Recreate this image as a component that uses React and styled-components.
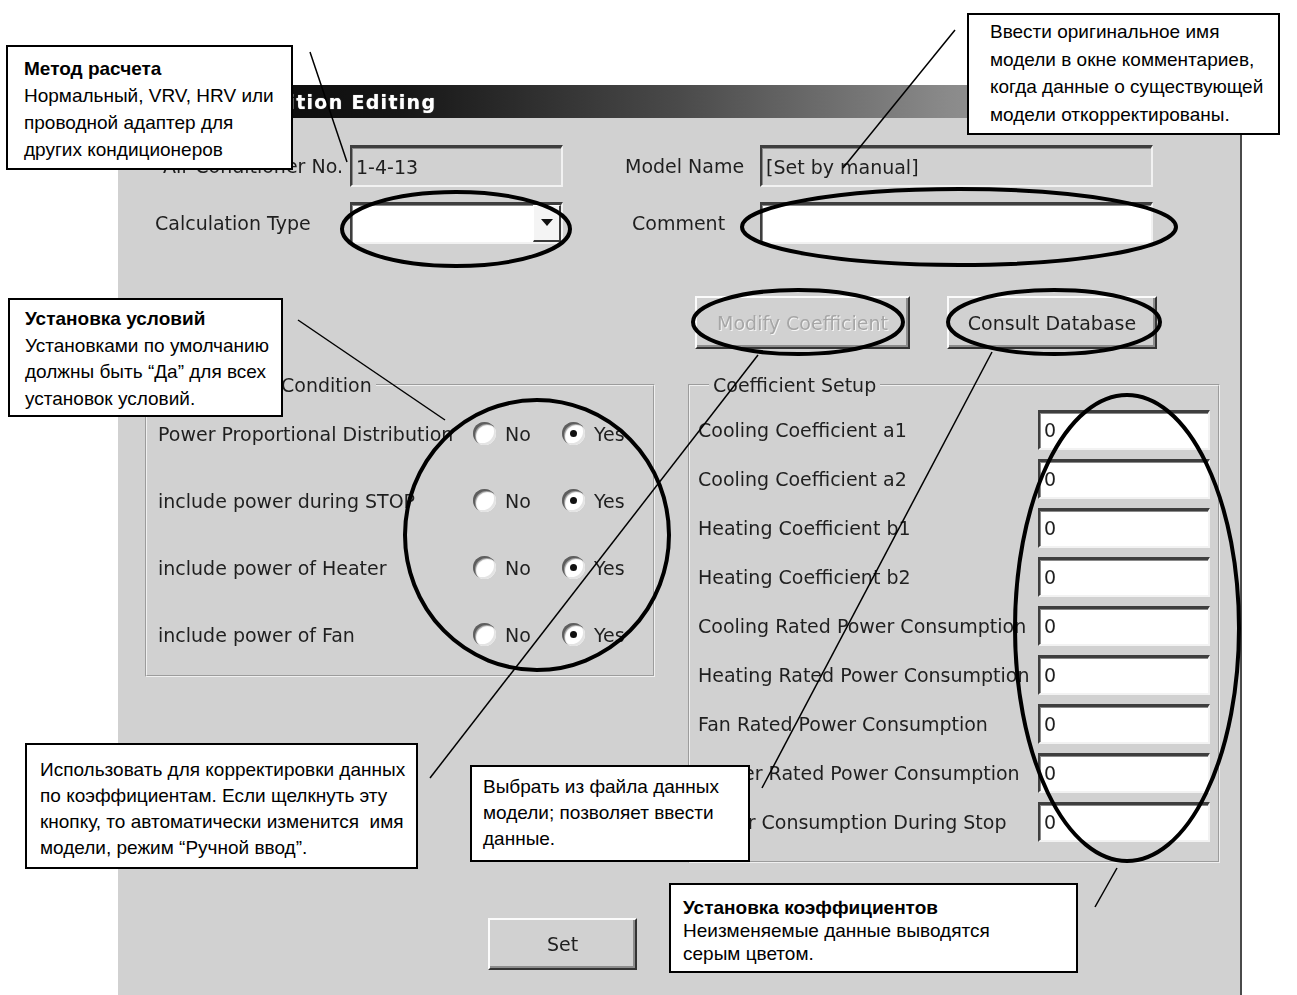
import React from "react";
import styled, { createGlobalStyle } from "styled-components";

const GlobalStyle = createGlobalStyle`
  html, body {
    margin: 0;
    padding: 0;
    overflow: hidden;
    background: #fff;
  }
  body {
    font-family: "DejaVu Sans", Verdana, sans-serif;
  }
`;

const Page = styled.div`
  position: relative;
  width: 1297px;
  height: 995px;
  overflow: hidden;
  box-sizing: border-box;
  padding: 85px 0 0 118px;
`;

const Window = styled.div`
  box-sizing: border-box;
  width: 1124px;
  height: 940px;
  background: #d1d1d1;
  border-right: 2px solid #4a4a4a;
  display: flex;
  flex-direction: column;
  filter: blur(0.5px);
  color: #1f1f1f;
  font-size: 19px;
`;

const TitleBar = styled.div`
  height: 33px;
  flex: 0 0 33px;
  display: flex;
  align-items: center;
  padding-left: 111px;
  background: linear-gradient(to right, #000 0%, #161616 25%, #4a4a4a 50%, #8a8a8a 74%, #b8b8b8 100%);
  color: #fff;
  font-weight: bold;
  font-size: 19px;
  letter-spacing: 1.3px;
  text-shadow: 0 0 1px rgba(255, 255, 255, 0.6);
`;

const TopGrid = styled.div`
  display: grid;
  grid-template-columns: 232px 213px 62px 135px 393px;
  grid-template-rows: 42px 42px;
  row-gap: 15px;
  align-items: center;
  margin-top: 27px;
`;

const Label = styled.span`
  white-space: nowrap;
  text-align: ${(p) => (p.$right ? "right" : "left")};
  padding-right: ${(p) => (p.$right ? "7px" : "0")};
  padding-left: ${(p) => p.$indent || 0}px;
`;

const Field = styled.div`
  box-sizing: border-box;
  height: ${(p) => p.$h || 42}px;
  width: ${(p) => (p.$w ? `${p.$w}px` : "auto")};
  display: flex;
  align-items: center;
  padding-left: 4px;
  background: ${(p) => (p.$white ? "#fff" : "#d1d1d1")};
  border-style: solid;
  border-width: 3px 2px 2px 2px;
  border-color: #3e3e3e #f2f2f2 #f2f2f2 #3e3e3e;
  box-shadow: inset 1px 1px 0 #8a8a8a;
  white-space: nowrap;
  overflow: hidden;
`;

const ComboButton = styled.span`
  box-sizing: border-box;
  margin-left: auto;
  width: 28px;
  height: 100%;
  display: flex;
  align-items: center;
  justify-content: center;
  background: #f4f4f4;
  border-style: solid;
  border-width: 1px 2px 2px 1px;
  border-color: #fff #3a3a3a #3a3a3a #fff;
`;

const ButtonRow = styled.div`
  display: flex;
  gap: 37px;
  margin: 52px 0 0 577px;
`;

const Button = styled.div`
  box-sizing: border-box;
  width: ${(p) => p.$w}px;
  height: ${(p) => p.$h || 53}px;
  display: flex;
  align-items: center;
  justify-content: center;
  background: #d1d1d1;
  border-style: solid;
  border-width: 2px;
  border-color: #fbfbfb #333 #333 #fbfbfb;
  box-shadow: inset -2px -2px 0 #8c8c8c;
  color: ${(p) => (p.$disabled ? "#a6a6a6" : "#1f1f1f")};
  text-shadow: ${(p) => (p.$disabled ? "1px 1px 0 #f5f5f5" : "none")};
  white-space: nowrap;
`;

const Groups = styled.div`
  display: flex;
  align-items: flex-start;
  gap: 33px;
  margin: 25px 0 0 27px;
`;

const Group = styled.fieldset`
  box-sizing: border-box;
  margin: 0;
  padding: ${(p) => p.$pad};
  width: ${(p) => p.$w}px;
  height: ${(p) => p.$h}px;
  border: 2px groove #f0f0f0;
  min-inline-size: 0;
`;

const Legend = styled.legend`
  margin-left: ${(p) => p.$offset}px;
  padding: 0 4px;
  line-height: 22px;
  white-space: nowrap;
`;

const ConditionRow = styled.div`
  display: grid;
  grid-template-columns: 315px 89px 1fr;
  align-items: center;
  height: 67px;
`;

const Option = styled.span`
  display: flex;
  align-items: center;
  gap: 9px;
`;

const Radio = styled.span`
  position: relative;
  width: 23px;
  height: 23px;
  border-radius: 50%;
  background: #fff;
  box-shadow: inset 2px 2px 0 #5e5e5e, inset 3px 3px 1px #9a9a9a, inset -2px -2px 0 #e4e4e4;
  &::after {
    content: "";
    display: ${(p) => (p.$checked ? "block" : "none")};
    position: absolute;
    top: 8px;
    left: 8px;
    width: 7px;
    height: 7px;
    border-radius: 50%;
    background: #111;
  }
`;

const CoefRow = styled.div`
  display: grid;
  grid-template-columns: 340px 172px;
  align-items: center;
  height: 49px;
`;

const SetRow = styled.div`
  margin: 55px 0 0 370px;
`;

const Overlay = styled.svg`
  position: absolute;
  left: 0;
  top: 0;
  width: 1297px;
  height: 995px;
  pointer-events: none;
`;

const Callout = styled.div`
  position: absolute;
  box-sizing: border-box;
  left: ${(p) => p.$x}px;
  top: ${(p) => p.$y}px;
  width: ${(p) => p.$w}px;
  padding: ${(p) => p.$pad};
  background: #fff;
  border: 2px solid #000;
  font-family: "Liberation Sans", Arial, sans-serif;
  font-size: 19px;
  line-height: ${(p) => p.$lh}px;
  color: #000;
  white-space: pre;
`;

const CalloutTitle = styled.div`
  font-weight: bold;
`;

const conditions = [
  "Power Proportional Distribution",
  "include power during STOP",
  "include power of Heater",
  "include power of Fan",
];

const coefficients = [
  "Cooling Coefficient a1",
  "Cooling Coefficient a2",
  "Heating Coefficient b1",
  "Heating Coefficient b2",
  "Cooling Rated Power Consumption",
  "Heating Rated Power Consumption",
  "Fan Rated Power Consumption",
  "Heater Rated Power Consumption",
  "Power Consumption During Stop",
];

const ellipses = [
  { cx: 456, cy: 229, rx: 114, ry: 37 },
  { cx: 959, cy: 227, rx: 217, ry: 38 },
  { cx: 798, cy: 322, rx: 105, ry: 32 },
  { cx: 1054, cy: 322, rx: 106, ry: 32 },
  { cx: 537, cy: 535, rx: 132, ry: 135 },
  { cx: 1127, cy: 628, rx: 112, ry: 233 },
];

const leaders = [
  [310, 52, 347, 162],
  [955, 30, 843, 168],
  [298, 320, 445, 420],
  [758, 355, 430, 778],
  [992, 352, 762, 788],
  [1117, 868, 1095, 907],
];

const callouts = [
  {
    x: 6, y: 45, w: 287, lh: 27, pad: "8px 0 5px 16px",
    title: "Метод расчета",
    lines: ["Нормальный, VRV, HRV или", "проводной адаптер для", "других кондиционеров"],
  },
  {
    x: 967, y: 13, w: 313, lh: 27.5, pad: "3px 0 5px 21px",
    lines: ["Ввести оригинальное имя", "модели в окне комментариев,", "когда данные о существующей", "модели откорректированы."],
  },
  {
    x: 8, y: 298, w: 275, lh: 26.5, pad: "6px 0 3px 15px",
    title: "Установка условий",
    lines: ["Установками по умолчанию", "должны быть “Да” для всех", "установок условий."],
  },
  {
    x: 25, y: 743, w: 393, lh: 26, pad: "12px 0 6px 13px",
    lines: [
      "Использовать для корректировки данных",
      "по коэффициентам. Если щелкнуть эту",
      "кнопку, то автоматически изменится  имя",
      "модели, режим “Ручной ввод”.",
    ],
  },
  {
    x: 470, y: 765, w: 280, lh: 26, pad: "7px 0 8px 11px",
    lines: ["Выбрать из файла данных", "модели; позволяет ввести", "данные."],
  },
  {
    x: 669, y: 883, w: 409, lh: 23, pad: "11px 0 6px 12px",
    title: "Установка коэффициентов",
    lines: ["Неизменяемые данные выводятся", "серым цветом."],
  },
];

function DropArrow() {
  return (
    <svg width="12" height="8" viewBox="0 0 12 8">
      <polygon points="0,0 12,0 6,7" fill="#111" />
    </svg>
  );
}

export default function App() {
  return (
    <Page>
      <GlobalStyle />
      <Window>
        <TitleBar>Condition Editing</TitleBar>

        <TopGrid>
          <Label $right>Air Conditioner No.</Label>
          <Field>1-4-13</Field>
          <span />
          <Label>Model Name</Label>
          <Field>[Set by manual]</Field>

          <Label $indent={37}>Calculation Type</Label>
          <Field $white>
            <ComboButton>
              <DropArrow />
            </ComboButton>
          </Field>
          <span />
          <Label $indent={7}>Comment</Label>
          <Field $white />
        </TopGrid>

        <ButtonRow>
          <Button $w={215} $disabled>
            Modify Coefficient
          </Button>
          <Button $w={210}>Consult Database</Button>
        </ButtonRow>

        <Groups>
          <Group $w={510} $h={303} $pad="4px 0 0 11px">
            <Legend $offset={7}>Calculation Condition</Legend>
            {conditions.map((c) => (
              <ConditionRow key={c}>
                <Label>{c}</Label>
                <Option>
                  <Radio />
                  No
                </Option>
                <Option>
                  <Radio $checked />
                  Yes
                </Option>
              </ConditionRow>
            ))}
          </Group>

          <Group $w={532} $h={489} $pad="9px 0 0 8px">
            <Legend $offset={11}>Coefficient Setup</Legend>
            {coefficients.map((c) => (
              <CoefRow key={c}>
                <Label>{c}</Label>
                <Field $white $h={40} $w={172}>
                  0
                </Field>
              </CoefRow>
            ))}
          </Group>
        </Groups>

        <SetRow>
          <Button $w={149} $h={52}>
            Set
          </Button>
        </SetRow>
      </Window>

      <Overlay viewBox="0 0 1297 995">
        {ellipses.map((e, i) => (
          <ellipse key={i} cx={e.cx} cy={e.cy} rx={e.rx} ry={e.ry} fill="none" stroke="#000" strokeWidth="4" />
        ))}
        {leaders.map(([x1, y1, x2, y2], i) => (
          <line key={i} x1={x1} y1={y1} x2={x2} y2={y2} stroke="#000" strokeWidth="1.5" />
        ))}
      </Overlay>

      {callouts.map((c, i) => (
        <Callout key={i} $x={c.x} $y={c.y} $w={c.w} $lh={c.lh} $pad={c.pad}>
          {c.title && <CalloutTitle>{c.title}</CalloutTitle>}
          {c.lines.map((l) => (
            <div key={l}>{l}</div>
          ))}
        </Callout>
      ))}
    </Page>
  );
}
